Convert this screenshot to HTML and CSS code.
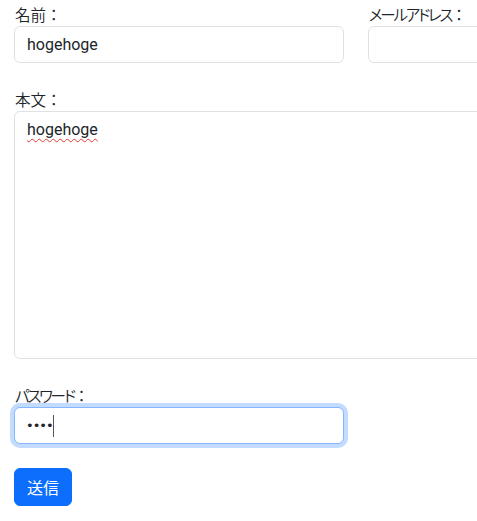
FILE: index.html
```html
<!DOCTYPE html>
<html lang="ja">
<head>
<meta charset="utf-8">
<title>フォーム</title>
<link rel="stylesheet" href="styles.css">
</head>
<body>
<form class="form">
  <div class="row">
    <div class="field">
      <label class="label" for="name">名前：</label>
      <input class="control" id="name" type="text" value="hogehoge">
    </div>
    <div class="field">
      <label class="label" for="email"><span class="kana">メールアドレス</span>：</label>
      <input class="control" id="email" type="email" value="">
    </div>
  </div>
  <div class="field field-wide">
    <label class="label" for="body">本文：</label>
    <textarea class="control area" id="body" spellcheck="false">hogehoge</textarea>
  </div>
  <div class="row">
    <div class="field">
      <label class="label" for="pw"><span class="kana">パスワード</span>：</label>
      <div class="caret-wrap">
        <input class="control is-focused" id="pw" type="password" value="hoge">
        <span class="caret"></span>
      </div>
    </div>
  </div>
  <button class="btn" type="button">送信</button>
</form>
</body>
</html>
```
FILE: styles.css
```css
html {
  overflow: hidden;
}
body {
  margin: 0;
  background: #fff;
  color: #212529;
  font-family: Roboto, "Noto Sans CJK JP", sans-serif;
  font-size: 16px;
  line-height: 24px;
}
.form {
  width: 684px;
  padding: 2px 0 0 14px;
  display: flex;
  flex-direction: column;
}
.row {
  display: grid;
  grid-template-columns: 330px 330px;
  column-gap: 24px;
  margin-bottom: 24px;
}
.field-wide {
  margin-bottom: 24px;
}
.label {
  display: block;
  height: 24px;
  font-family: "Noto Sans CJK JP", sans-serif;
  font-size: 15.5px;
  font-weight: 350;
  margin-left: 1px;
}
.kana {
  font-feature-settings: "palt";
  letter-spacing: -2.2px;
}
.control {
  display: block;
  box-sizing: border-box;
  width: 100%;
  height: 37px;
  margin: 0;
  padding: 6px 12px;
  border: 1px solid #dee2e6;
  border-radius: 6px;
  background: #fff;
  color: #212529;
  font-family: Roboto, "Noto Sans CJK JP", sans-serif;
  font-size: 16px;
  line-height: 24px;
  outline: none;
}
.area {
  height: 248px;
  resize: none;
  text-decoration: underline wavy #e53935;
  text-decoration-thickness: 1px;
  text-underline-offset: 3px;
}
.is-focused {
  border-color: #86b7fe;
  box-shadow: 0 0 0 4px rgba(13, 110, 253, 0.25);
  font-family: "DejaVu Sans", sans-serif;
  font-size: 13px;
  letter-spacing: -1px;
  padding-left: 11px;
}
.caret-wrap {
  position: relative;
}
.caret {
  position: absolute;
  left: 39px;
  top: 8px;
  width: 1px;
  height: 22px;
  background: #555;
}
.btn {
  align-self: flex-start;
  height: 38px;
  padding: 6px 12px;
  border: 1px solid #0d6efd;
  border-radius: 6px;
  background: #0d6efd;
  color: #fff;
  font-family: "Noto Sans CJK JP", sans-serif;
  font-size: 16px;
  line-height: 24px;
}
```
